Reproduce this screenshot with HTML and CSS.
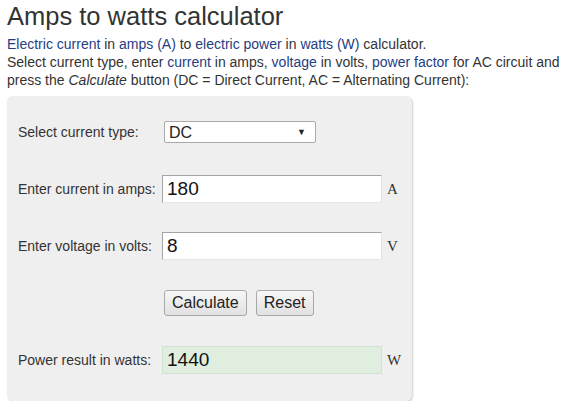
FILE: index.html
```html
<!DOCTYPE html>
<html lang="en">
<head>
    <meta charset="UTF-8">
    <title>Amps to watts calculator</title>
    <link rel="stylesheet" href="styles.css">
</head>
<body>
    <h1>Amps to watts calculator</h1>
    <p class="intro">
        <a href="#">Electric current</a> in <a href="#">amps (A)</a> to <a href="#">electric power</a> in <a href="#">watts (W)</a> calculator.<br>
        Select current type, enter <a href="#">current</a> in amps, <a href="#">voltage</a> in volts, <a href="#">power factor</a> for AC circuit and press the <i>Calculate</i> button (DC = Direct Current, AC = Alternating Current):
    </p>

    <form class="calc" onsubmit="calculate(event)">
        <div class="row">
            <label class="label">Select current type:</label>
            <span class="select-wrap">
                <select id="type">
                    <option>DC</option>
                    <option>AC - Single phase</option>
                    <option>AC - Three phase</option>
                </select>
            </span>
        </div>
        <div class="row">
            <label class="label" for="amps">Enter current in amps:</label>
            <input type="text" id="amps" class="field" value="180">
            <span class="unit">A</span>
        </div>
        <div class="row">
            <label class="label" for="volts">Enter voltage in volts:</label>
            <input type="text" id="volts" class="field" value="8">
            <span class="unit">V</span>
        </div>
        <div class="row">
            <span class="label"></span>
            <button type="submit" class="btn">Calculate</button>
            <button type="button" class="btn" onclick="resetForm()">Reset</button>
        </div>
        <div class="row">
            <label class="label" for="watts">Power result in watts:</label>
            <input type="text" id="watts" class="field result" value="1440" readonly>
            <span class="unit">W</span>
        </div>
    </form>

    <script>
        function calculate(event) {
            event.preventDefault();
            const amps = parseFloat(document.getElementById('amps').value);
            const volts = parseFloat(document.getElementById('volts').value);
            document.getElementById('watts').value = amps * volts;
        }

        function resetForm() {
            document.getElementById('amps').value = '';
            document.getElementById('volts').value = '';
            document.getElementById('watts').value = '';
        }
    </script>
</body>
</html>
```

FILE: styles.css
```css
body {
    margin: 0;
    padding: 0 7px;
    font-family: "Liberation Sans", Arial, sans-serif;
    color: #333;
    background: #fff;
}

h1 {
    margin: 0;
    padding-top: 1px;
    font-size: 25.5px;
    font-weight: normal;
    line-height: 30px;
}

.intro {
    margin: 4px 0 0;
    font-size: 14px;
    line-height: 18px;
}

.intro a {
    color: #263d83;
    text-decoration: none;
}

.calc {
    width: 394px;
    margin-top: 7px;
    padding: 22px 0 27px 11px;
    background-color: #efefef;
    border-radius: 6px;
    box-shadow: 1px 1px 2px #cfcfcf;
    display: flex;
    flex-direction: column;
    gap: 29px;
}

.row {
    display: flex;
    align-items: center;
    height: 28px;
}

.label {
    width: 144px;
    flex-shrink: 0;
    font-size: 14px;
}

.select-wrap {
    position: relative;
    margin-left: 2px;
}

.select-wrap::after {
    content: "\25BC";
    position: absolute;
    right: 10px;
    top: 6px;
    font-size: 9px;
    color: #222;
    pointer-events: none;
}

select {
    appearance: none;
    -webkit-appearance: none;
    width: 152px;
    height: 22px;
    padding: 0 0 0 4px;
    border: 1px solid #a9a9a9;
    border-radius: 2px;
    background: #fff;
    font-family: "Liberation Sans", Arial, sans-serif;
    font-size: 16px;
    color: #222;
}

.field {
    box-sizing: border-box;
    width: 220px;
    height: 28px;
    padding: 0 4px;
    border: 1px solid;
    border-color: #a5a5a5 #e6e6e6 #e6e6e6 #a5a5a5;
    background: #fff;
    font-family: "Liberation Sans", Arial, sans-serif;
    font-size: 19px;
    color: #111;
}

.result {
    background-color: #dfeedf;
    border-color: #d2e2d2;
}

.unit {
    margin-left: 5px;
    font-family: "Liberation Serif", "Times New Roman", serif;
    font-size: 15px;
}

.btn {
    height: 26px;
    margin-left: 2px;
    padding: 0 7px;
    border: 1px solid #a8a8a8;
    border-radius: 3px;
    background: linear-gradient(#f7f7f7, #e1e1e1);
    font-family: "Liberation Sans", Arial, sans-serif;
    font-size: 16px;
    color: #222;
}

.btn + .btn {
    margin-left: 9px;
}
```
